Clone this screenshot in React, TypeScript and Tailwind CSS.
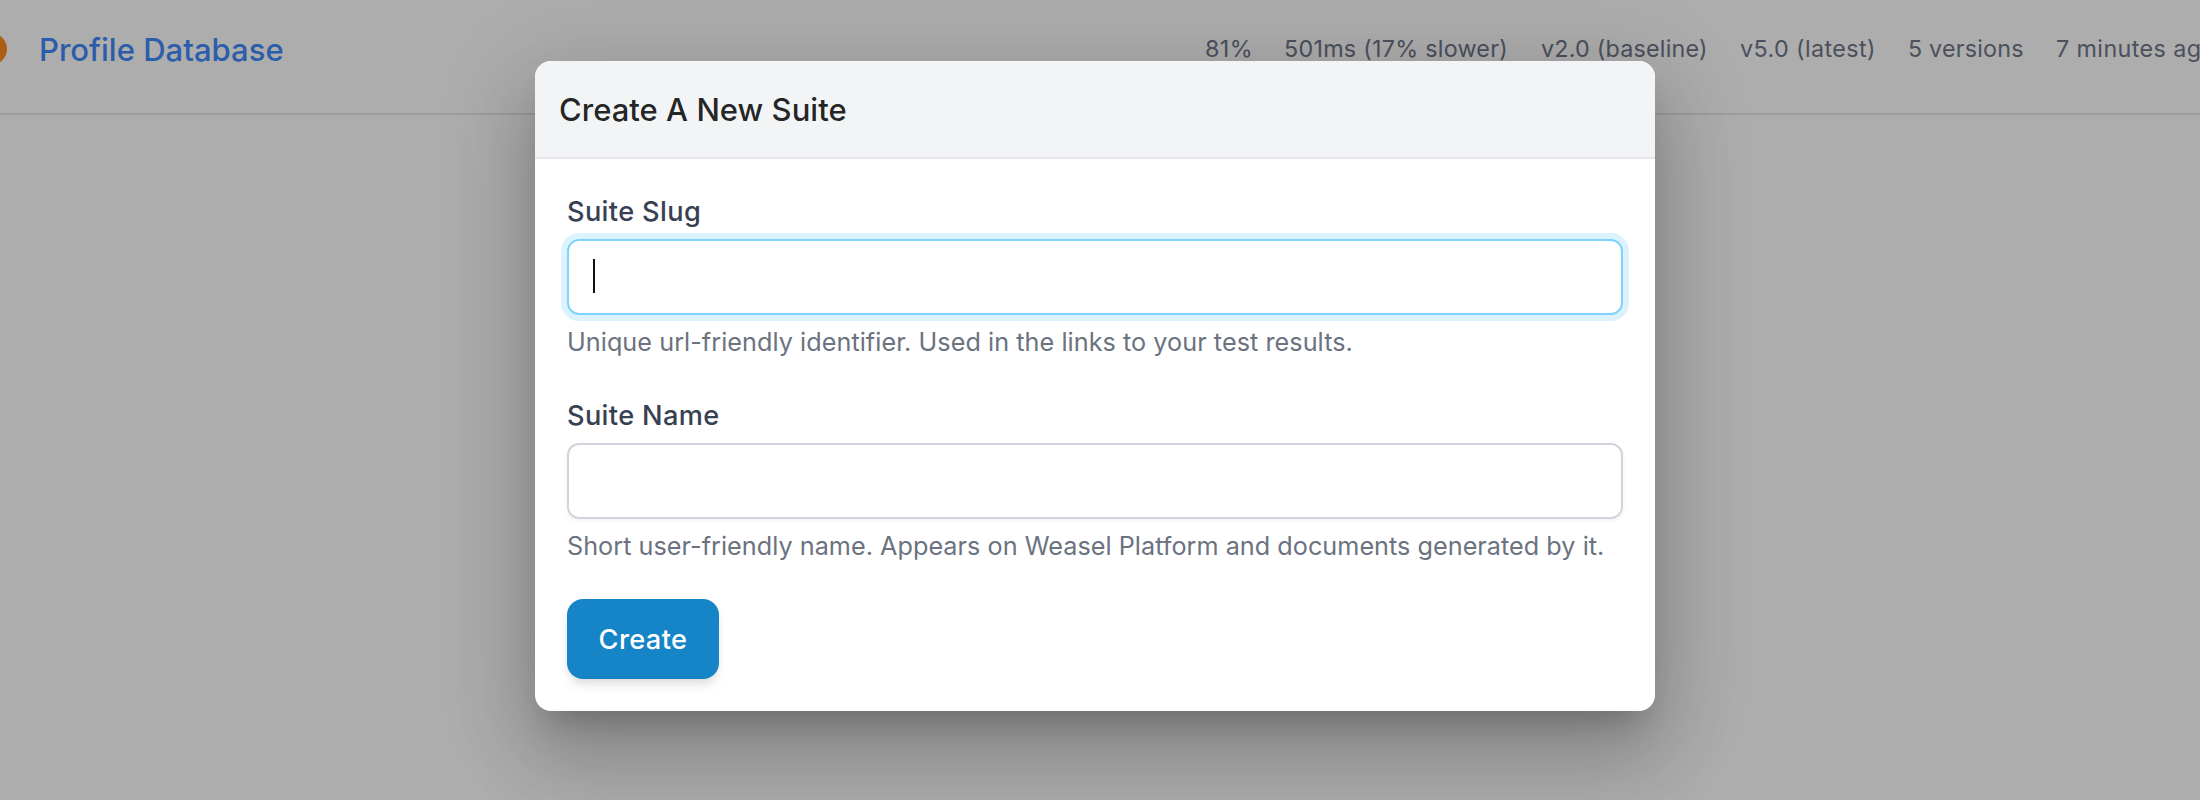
const stats = [
  { text: "81%", cls: "w-[47px] tracking-[0.4px]" },
  { text: "501ms (17% slower)", cls: "w-[225px] tracking-[0.27px]" },
  { text: "v2.0 (baseline)", cls: "w-[167px] tracking-[0.22px]" },
  { text: "v5.0 (latest)", cls: "w-[136px] tracking-[0.4px]" },
  { text: "5 versions", cls: "w-[116px] tracking-[0.2px]" },
  { text: "7 minutes ago", cls: "w-[160px] tracking-[0.4px]" },
];

function SuiteRow() {
  return (
    <div className="flex h-[115px] w-[2240px] items-start border-b-2 border-[#e5e7eb]">
      <span className="-ml-[25px] mt-[33px] size-8 shrink-0 rounded-full bg-[#fb8c1e]" />
      <a className="ml-8 mt-7 shrink-0 text-[31px] font-medium leading-[43px] text-[#4189fb] tracking-[0.03px]">
        Profile Database
      </a>
      <div className="ml-auto mr-[24px] mt-7 flex shrink-0 gap-8 whitespace-nowrap text-[23.3px] leading-[41px] text-[#70778a]">
        {stats.map((s) => (
          <span key={s.text} className={s.cls}>
            {s.text}
          </span>
        ))}
      </div>
    </div>
  );
}

function Field({ label, hint, focused, hintClass }: { label: string; hint: string; focused?: boolean; hintClass: string }) {
  return (
    <div className="mb-[34px]">
      <label className="block h-10 text-[27.2px] font-medium leading-[42px] tracking-[0.35px] text-[#374151]">{label}</label>
      <div
        className={
          focused
            ? "mt-2 flex h-[76px] items-center rounded-xl border-2 border-[#7dd3fc] px-6 shadow-[0_0_0_6px_#dcf3fe]"
            : "mt-2 flex h-[76px] items-center rounded-xl border-2 border-[#d1d5db] px-6 shadow-[0_2px_4px_rgba(0,0,0,0.05)]"
        }
      >
        {focused && <span className="-mt-0.5 h-[34px] w-0.5 bg-[#111111]" />}
      </div>
      <p className={hintClass}>{hint}</p>
    </div>
  );
}

export default function App() {
  return (
    <div className="relative h-[800px] w-[2200px] overflow-hidden bg-white font-['Inter',sans-serif]">
      <SuiteRow />
      <div className="absolute inset-0 flex items-start justify-center bg-black/32 pr-[10px] pt-[61px]">
        <div className="h-[650px] w-[1120px] overflow-hidden rounded-2xl bg-white shadow-[0_22px_30px_-14px_rgba(0,0,0,0.2),0_48px_76px_6px_rgba(0,0,0,0.14),0_18px_92px_16px_rgba(0,0,0,0.12)]">
          <h2 className="h-[98px] border-b-2 border-[#e5e7eb] bg-[#f3f4f6] pl-6 text-[31px] font-medium leading-[98px] tracking-[0.02px] text-black/87">
            Create A New Suite
          </h2>
          <div className="px-8 pt-8">
            <Field
              label="Suite Slug"
              hint="Unique url-friendly identifier. Used in the links to your test results."
              hintClass="mt-2 whitespace-nowrap text-[25.2px] leading-[38px] tracking-[0.055px] text-[#6b7280]"
              focused
            />
            <Field
              label="Suite Name"
              hint="Short user-friendly name. Appears on Weasel Platform and documents generated by it."
              hintClass="mt-2 whitespace-nowrap text-[25.2px] leading-[38px] tracking-[0.035px] text-[#6b7280]"
            />
            <button className="h-20 w-[152px] rounded-2xl bg-[#1585c7] pt-0.5 text-[27.2px] font-medium tracking-[0.38px] text-white shadow-[0_8px_12px_-2px_rgba(0,0,0,0.1),0_4px_8px_-2px_rgba(0,0,0,0.06)]">
              Create
            </button>
          </div>
        </div>
      </div>
    </div>
  );
}
